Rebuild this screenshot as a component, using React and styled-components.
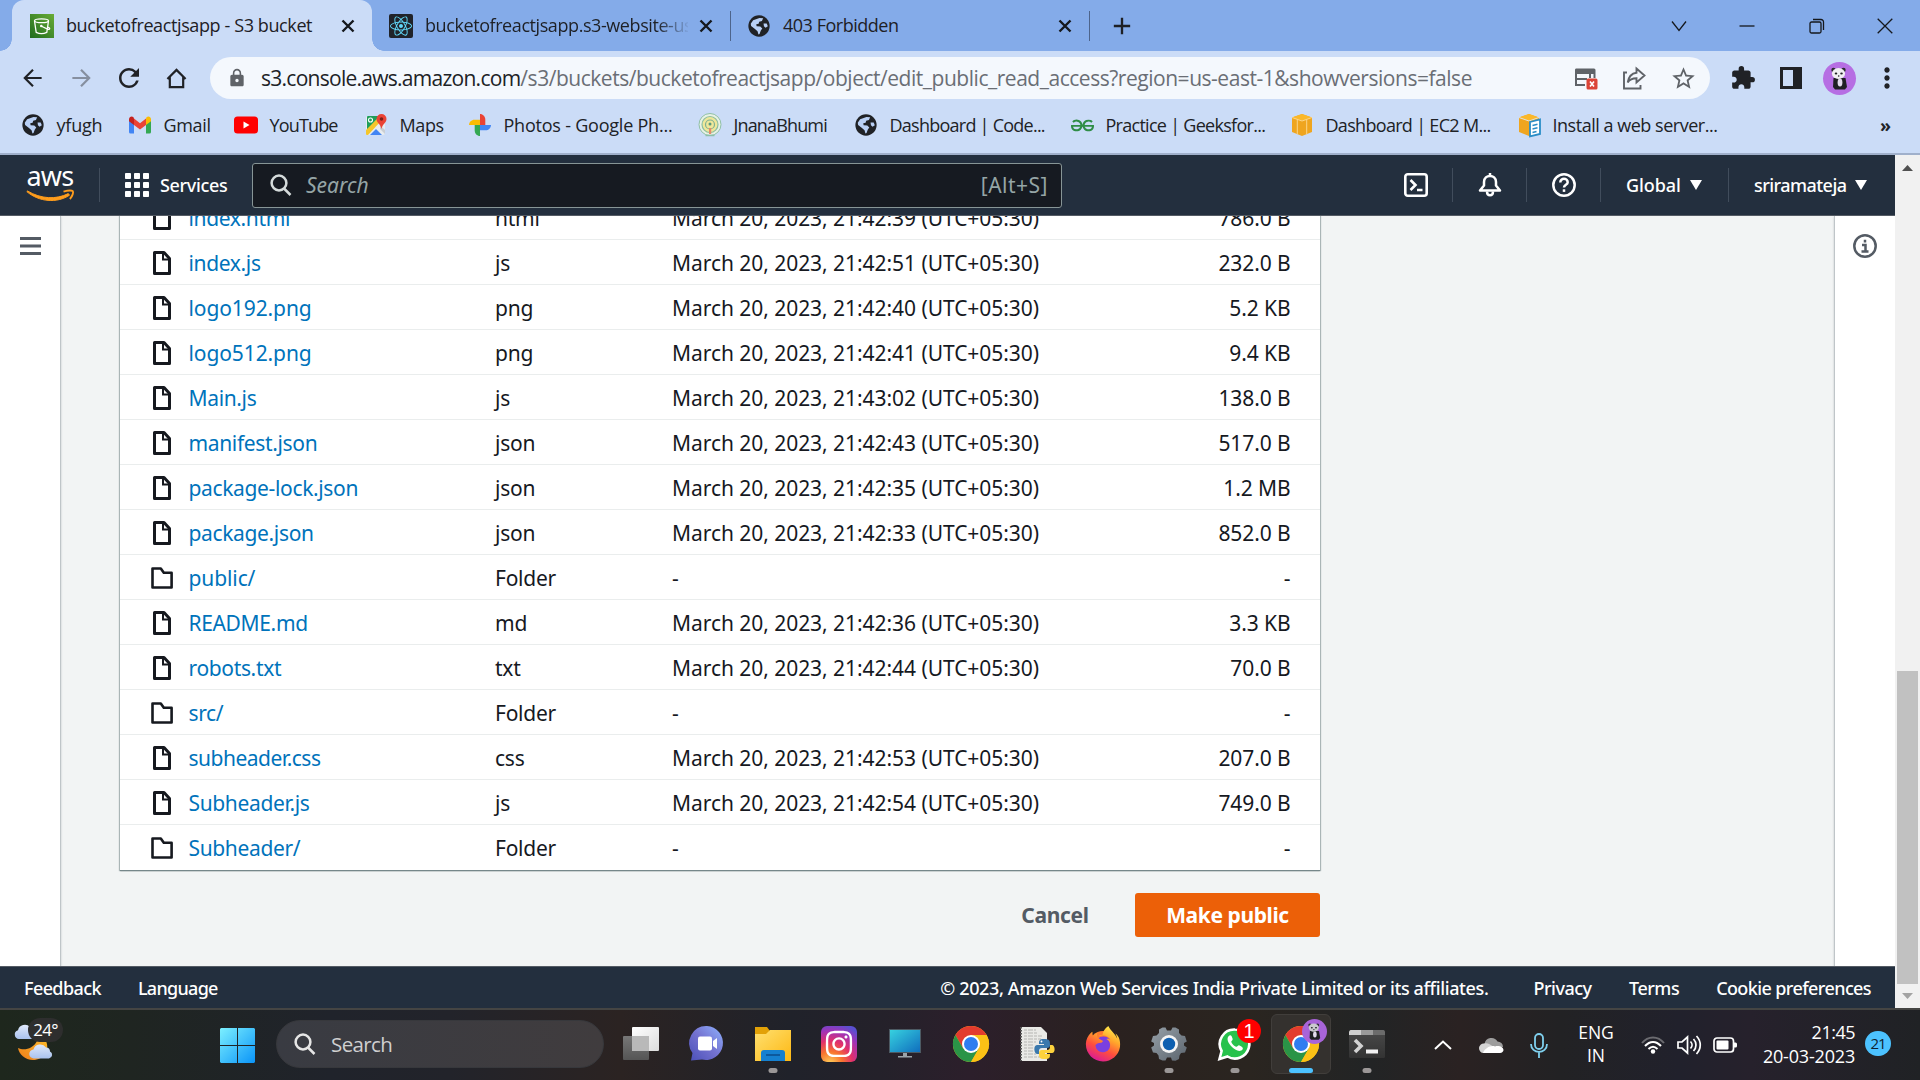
import React from "react";
import styled, { createGlobalStyle } from "styled-components";
import { MdExtension, MdStarOutline, MdLock, MdMoreVert, MdRefresh, MdAdd } from "react-icons/md";
import { FaReact, FaInstagram, FaFirefoxBrowser } from "react-icons/fa";
import { SiGeeksforgeeks } from "react-icons/si";

const UI = `"Open Sans", "Noto Sans", sans-serif`;
const PAGE = `"Noto Sans", "Open Sans", sans-serif`;

const Global = createGlobalStyle`
  * { box-sizing: border-box; }
  body { margin: 0; overflow: hidden; background: #f2f3f3; font-family: ${UI}; }
  svg { display: block; flex: none; overflow: visible; }
`;

const Screen = styled.div`
  width: 1920px;
  height: 1080px;
  display: flex;
  flex-direction: column;
  overflow: hidden;
`;

const Label = styled.span`
  white-space: nowrap;
  letter-spacing: ${(p) => p.$ls || 0}px;
`;

/* Centres one icon in a slot of a given width */
const Slot = styled.div`
  width: ${(p) => p.$w}px;
  height: ${(p) => (p.$h ? p.$h + "px" : "100%")};
  margin-left: ${(p) => p.$ml || 0}px;
  flex: none;
  display: flex;
  align-items: center;
  justify-content: center;
`;

/* ---------- Browser chrome ---------- */

const TabStrip = styled.div`
  height: 51px;
  flex: none;
  display: flex;
  align-items: center;
  padding-left: 12px;
  background: #84abe9;
  color: #1e2025;
  font-size: 18px;
`;

const Tab = styled.div`
  position: relative;
  width: ${(p) => p.$w}px;
  height: 51px;
  flex: none;
  display: flex;
  align-items: center;
  padding-left: ${(p) => p.$pad}px;
  border-radius: 12px 12px 0 0;
  background: ${(p) => (p.$active ? "#cbdcf7" : "transparent")};
  &::before,
  &::after {
    content: "";
    display: ${(p) => (p.$active ? "block" : "none")};
    position: absolute;
    bottom: 0;
    width: 12px;
    height: 12px;
  }
  &::before {
    left: -12px;
    background: radial-gradient(circle at 0 0, transparent 11.5px, #cbdcf7 12px);
  }
  &::after {
    right: -12px;
    background: radial-gradient(circle at 100% 0, transparent 11.5px, #cbdcf7 12px);
  }
`;

const TabTitle = styled(Label)`
  flex: none;
  width: ${(p) => p.$w}px;
  margin-left: ${(p) => p.$gap || 12}px;
  padding-bottom: 1px;
  mask-image: ${(p) => (p.$fade ? "linear-gradient(to right, #000 88%, transparent 101%)" : "none")};
`;

const TabDivider = styled.div`
  width: 1px;
  height: 30px;
  background: #4d648b;
`;

const WindowControls = styled.div`
  margin-left: auto;
  display: flex;
  height: 42px;
`;

const Toolbar = styled.div`
  height: 54px;
  flex: none;
  display: flex;
  align-items: center;
  padding-left: 9px;
  background: #cbdcf7;
  color: #202226;
`;

const AddressBar = styled.div`
  width: 1500px;
  height: 42px;
  margin-left: 10px;
  padding-left: 17px;
  border-radius: 21px;
  background: #f4f8fd;
  color: #5f6368;
  display: flex;
  align-items: center;
  flex: none;
`;

const Url = styled(Label)`
  flex: 1;
  margin-left: 14px;
  font-size: 21px;
  color: #6a6e75;
  b { font-weight: 400; color: #202226; letter-spacing: -0.73px; }
`;

const Bookmarks = styled.div`
  height: 50px;
  flex: none;
  display: flex;
  align-items: center;
  padding: 0 0 8px 21px;
  background: #cbdcf7;
  border-bottom: 2px solid #a0b0cb;
  color: #202226;
  font-size: 18px;
`;

const Bookmark = styled.div`
  width: ${(p) => p.$w}px;
  flex: none;
  display: flex;
  align-items: center;
  gap: 11.5px;
`;

const Overflow = styled.div`
  margin-left: auto;
  margin-right: 29px;
  font-weight: 700;
  line-height: 20px;
`;

/* ---------- Console page ---------- */

const Viewport = styled.div`
  height: 853px;
  flex: none;
  display: flex;
  font-family: ${PAGE};
`;

const Page = styled.div`
  width: 1895px;
  display: flex;
  flex-direction: column;
`;

const Nav = styled.div`
  height: 61px;
  flex: none;
  display: flex;
  align-items: center;
  background: #232f3e;
  border-bottom: 1px solid #545b64;
  color: #fff;
  font-size: 18px;
  font-weight: 500;
`;

const NavDivider = styled.div`
  width: 1px;
  height: 34px;
  margin-bottom: 1px;
  background: #414d5c;
  flex: none;
`;

const Logo = styled.div`
  width: 99px;
  height: 60px;
  padding: 8px 0 0 26px;
  flex: none;
`;

const LogoWord = styled.div`
  width: 48px;
  height: 27px;
  font: 400 27px/26px ${PAGE};
  letter-spacing: -0.7px;
  text-align: center;
`;

const ServicesButton = styled.div`
  width: 152px;
  display: flex;
  align-items: center;
  gap: 11px;
  padding-left: 25px;
`;

const SearchBox = styled.div`
  width: 810px;
  height: 45px;
  display: flex;
  align-items: center;
  padding: 0 13px 0 17px;
  border: 1px solid #879596;
  border-radius: 3px;
  background: #161a21;
  color: #95a5a6;
  font-size: 21px;
  font-weight: 400;
  i { flex: 1; margin-left: 14px; }
`;

const NavEnd = styled.div`
  margin-left: auto;
  display: flex;
  align-items: center;
  height: 60px;
`;

const NavMenu = styled.div`
  width: ${(p) => p.$w}px;
  padding-left: 25px;
  display: flex;
  align-items: center;
  gap: 9px;
`;

const Body = styled.div`
  height: 750px;
  flex: none;
  display: flex;
  background: #f2f4f4;
  overflow: hidden;
`;

const SidePanel = styled.div`
  width: 61px;
  flex: none;
  background: #fff;
  display: flex;
  justify-content: center;
  padding-top: 18px;
  border: 0 solid #bfc5c8;
  border-left-width: ${(p) => (p.$right ? 1 : 0)}px;
  border-right-width: ${(p) => (p.$right ? 0 : 1)}px;
  box-shadow: 0 1px 2px rgba(0, 28, 36, 0.2);
`;

const Main = styled.div`
  flex: 1;
  padding-left: 59px;
`;

const TableWindow = styled.div`
  height: 657px;
  width: 1204px;
  margin-left: -2px;
  padding-left: 2px;
  overflow: hidden;
  display: flex;
  flex-direction: column;
  justify-content: flex-end;
  padding-bottom: 3px;
`;

const Table = styled.div`
  width: 1200px;
  flex: none;
  background: #fff;
  box-shadow: 0 1px 1px #76878a, 1px 1px 1px rgba(0, 28, 36, 0.25), -1px 1px 1px rgba(0, 28, 36, 0.25);
`;

const Row = styled.div`
  height: 45px;
  display: grid;
  grid-template-columns: 37px 307px 177px 385px 1fr;
  align-items: center;
  padding: 1px 29.5px 0 31px;
  border-bottom: 1px solid #eaeded;
  color: #16191f;
  font-size: 21px;
  &:last-child { border-bottom-color: #fff; }
  svg { justify-self: start; }
`;

const FileLink = styled(Label)`
  color: #0073bb;
  margin-left: 0.5px;
`;

const Size = styled(Label)`
  text-align: right;
`;

const Actions = styled.div`
  width: 1200px;
  height: 64px;
  display: flex;
  align-items: flex-end;
  justify-content: flex-end;
  font-size: 21px;
  font-weight: 700;
`;

const ActionButton = styled.div`
  width: ${(p) => p.$w}px;
  height: 44px;
  display: flex;
  align-items: center;
  justify-content: center;
  padding-bottom: 1px;
  border-radius: 3px;
  background: ${(p) => (p.$primary ? "#ec6008" : "transparent")};
  color: ${(p) => (p.$primary ? "#fff" : "#545b64")};
`;

const Footer = styled.div`
  height: 42px;
  flex: none;
  display: flex;
  align-items: center;
  padding: 0 24px;
  background: #232f3e;
  border-top: 1px solid #545b64;
  color: #fff;
  font-size: 18px;
  font-weight: 500;
`;

const FooterItem = styled(Label)`
  margin-left: ${(p) => (p.$push ? "auto" : (p.$ml || 0) + "px")};
`;

const Scrollbar = styled.div`
  width: 25px;
  display: flex;
  flex-direction: column;
  align-items: center;
  background: #f1f1f1;
`;

const ThumbTrack = styled.div`
  flex: 1;
  display: flex;
  align-items: flex-end;
`;

const Thumb = styled.div`
  width: 21px;
  height: 313px;
  background: #c1c1c1;
`;

/* ---------- Taskbar ---------- */

const Taskbar = styled.div`
  height: 72px;
  flex: none;
  display: flex;
  align-items: center;
  border-top: 2px solid #454543;
  background: linear-gradient(90deg, #1e271d 0, #1f2521 130px, #20232b 330px, #22232a 450px, #2b2322 620px, #20222a 790px, #24212a 880px, #2c1f2b 970px, #2a211f 1110px, #2a2520 1250px, #222425 1370px, #2a2222 1460px, #222224 1560px, #21212c 1680px, #26212c 1750px, #202225 1920px);
  color: #fff;
`;

const Weather = styled.div`
  width: 220px;
  height: 70px;
  padding: 8px 0 0 14px;
  flex: none;
`;

const WeatherIcon = styled.div`
  position: relative;
  width: 50px;
  height: 56px;
`;

const Temperature = styled.div`
  position: absolute;
  left: 14px;
  top: 0;
  width: 35px;
  height: 24px;
  border-radius: 12px;
  background: #2e2e2e;
  font-size: 17px;
  line-height: 24px;
  text-align: center;
  letter-spacing: -0.8px;
`;

const TaskSearch = styled.div`
  width: 328px;
  height: 48px;
  margin: 0 4px 3px 21px;
  padding-left: 17px;
  display: flex;
  align-items: center;
  gap: 15px;
  flex: none;
  border-radius: 24px;
  border: 1px solid #37383c;
  background: linear-gradient(90deg, #393b42, #403c3e);
  color: #cfcfd0;
  font-size: 20.5px;
`;

const TaskButton = styled.div`
  position: relative;
  width: 60px;
  height: 60px;
  margin: 0 3px 3px;
  flex: none;
  display: flex;
  align-items: center;
  justify-content: center;
  border-radius: 6px;
  border: 1px solid ${(p) => (p.$active ? "#413e3b" : "transparent")};
  background: ${(p) => (p.$active ? "#34312e" : "transparent")};
  &::after {
    content: "";
    display: ${(p) => (p.$run ? "block" : "none")};
    position: absolute;
    bottom: 0;
    left: 50%;
    width: ${(p) => (p.$active ? 24 : 9)}px;
    height: 5px;
    transform: translateX(-50%);
    border-radius: 3px;
    background: ${(p) => (p.$active ? "#4cc2ff" : "#9b9797")};
  }
`;

const Badge = styled.div`
  position: absolute;
  right: 3px;
  top: 4px;
  width: 24px;
  height: 24px;
  border-radius: 12px;
  background: #fe0000;
  font: 20px/24px "Liberation Sans", sans-serif;
  text-align: center;
`;

const AvatarBadge = styled.div`
  position: absolute;
  right: 3px;
  top: 4px;
`;

const Language = styled.div`
  width: 66px;
  text-align: center;
  font-size: 17.5px;
  line-height: 23px;
  padding-bottom: 2px;
`;

const Clock = styled.div`
  width: 106px;
  text-align: right;
  font-size: 18px;
  line-height: 24px;
  padding-bottom: 2px;
`;

const Count = styled.div`
  width: 26px;
  height: 25px;
  margin: 0 0 3px 10px;
  border-radius: 13px;
  background: #4cc2ff;
  color: #10222e;
  font-size: 15px;
  line-height: 24px;
  letter-spacing: -1px;
  text-align: center;
`;

/* ---------- Icons ---------- */

const Globe = ({ s = 22 }) => (
  <svg width={s} height={s} viewBox="0 0 24 24">
    <circle cx="12" cy="12" r="11.6" fill="#202226" />
    <path d="M12.5 3.2 16.5 3.6 15.2 6.6 12.2 7.4 11.6 9.6 9 10.2 9.4 12.4 13.4 12.6 15.6 14.6 14 17 12.6 20.6 11.4 21.4 10.4 17.8 7.6 15.2 3.4 12 3 9.6 5.6 5.6Z" fill="#b9d0f5" />
    <path d="M17 9.4 20.4 9.2 21.6 12.4 19.2 14 17.4 12.2Z" fill="#b9d0f5" />
  </svg>
);

const S3Icon = () => (
  <svg width="24" height="24" viewBox="0 0 24 24">
    <defs><linearGradient id="s3" x1="0" y1="1" x2="1" y2="0"><stop stopColor="#1f6b1e" /><stop offset="1" stopColor="#69ac36" /></linearGradient></defs>
    <rect width="24" height="24" fill="url(#s3)" />
    <g fill="none" stroke="#fff" strokeWidth="1.3">
      <ellipse cx="11.5" cy="6.8" rx="7" ry="1.9" />
      <path d="M4.5 7 6.2 18.4Q11.5 21 16.8 18.4L18.5 7M11 12 18 15.4Q20.4 15.4 19.4 14L17.8 13" />
    </g>
    <circle cx="11.3" cy="12" r="1.3" fill="#fff" />
  </svg>
);

const ReactTile = () => (
  <svg width="24" height="24" viewBox="0 0 24 24">
    <rect width="24" height="24" rx="2" fill="#20232a" />
    <FaReact x="1" y="1" size={22} color="#61dafb" />
  </svg>
);

const Gmail = () => (
  <svg width="24" height="24" viewBox="0 0 24 24">
    <path d="M1 5.5V19a1.6 1.6 0 0 0 1.6 1.6H6V9Z" fill="#4285f4" />
    <path d="M23 5.5V19a1.6 1.6 0 0 1-1.6 1.6H18V9Z" fill="#34a853" />
    <path d="M18 5.6V12l5-3.8V6.3c0-2.5-2.6-3.6-4.3-2.3Z" fill="#fbbc04" />
    <path d="M6 12V5.6l6 4.6 6-4.6V12l-6 4.6Z" fill="#ea4335" />
    <path d="M1 6.3v1.9L6 12V5.6L5.3 4C3.600 2.700 1 3.800 1 6.300Z" fill="#c5221f" />
  </svg>
);

const YouTube = () => (
  <svg width="24" height="24" viewBox="0 0 24 24">
    <rect y="3.500" width="24" height="17" rx="3.500" fill="#f00" />
    <path d="M9.500 8.500v7l6-3.500Z" fill="#fff" />
  </svg>
);

const Maps = () => (
  <svg width="24" height="24" viewBox="0 0 24 24">
    <rect x="2" y="3" width="19" height="19" rx="2" fill="#e8ecef" />
    <path d="M4 3h12L3 17V4a1 1 0 0 1 1-1Z" fill="#1f9d5a" />
    <path d="M2 17 15 4l3 3L4 22H3a1 1 0 0 1-1-1Z" fill="#f5c62b" />
    <path d="m6 22 6-6 6 6Z" fill="#4285f4" />
    <path d="M16 12.500 21 17v4l-5-5Z" fill="#c9ced3" />
    <circle cx="6.500" cy="7" r="2" fill="none" stroke="#fff" strokeWidth="1.100" />
    <path d="M17.500 1a5 5 0 0 0-5 5c0 4 4 4.500 5 10 1-5.500 5-6 5-10a5 5 0 0 0-5-5Z" fill="#ea4335" />
    <circle cx="17.500" cy="6" r="1.800" fill="#7d1f18" />
  </svg>
);

const Photos = () => (
  <svg width="24" height="24" viewBox="0 0 24 24">
    <path d="M12 1c3 0 5.300 2.500 5.300 5.500V12H12Z" fill="#ea4335" />
    <path d="M23 12c0 3-2.500 5.300-5.500 5.300H12V12Z" fill="#4285f4" />
    <path d="M12 23c-3 0-5.300-2.500-5.300-5.500V12H12Z" fill="#34a853" />
    <path d="M1 12c0-3 2.500-5.300 5.500-5.300H12V12Z" fill="#fbbc04" />
  </svg>
);

const Emblem = () => (
  <svg width="24" height="24" viewBox="0 0 24 24">
    <circle cx="12" cy="11.500" r="11" fill="#e9f1e4" stroke="#8fc0a6" />
    <circle cx="12" cy="11.500" r="8" fill="#efe79a" stroke="#8cbfa0" strokeWidth="1.200" />
    <circle cx="12" cy="11.500" r="4.500" fill="none" stroke="#7fb093" strokeWidth="1.200" />
    <circle cx="12" cy="11" r="1.500" fill="#5b9a7c" />
    <rect x="11" y="15" width="2.200" height="6" fill="#e58a6a" />
    <path d="M7.500 22.500h9" stroke="#8cbfa8" strokeWidth="1.500" />
  </svg>
);

const Cube = ({ doc }) => (
  <svg width="24" height="24" viewBox="0 0 24 24">
    <path d="M12 1 22 4.500V19L12 23 2 19V4.500Z" fill="#efa51f" />
    <path d="M12 1 22 4.500 12 8 2 4.500Z" fill="#fbb829" />
    {doc ? (
      <>
        <path d="M2 4.500 12 8l10-3.500" stroke="#e3e3dc" strokeWidth="1" fill="none" />
        <path d="M13 9 23 6.500V21l-10 2.300Z" fill="#fff" stroke="#2a8dc7" strokeWidth="1.800" />
        <path d="m15.500 12.500 5-1.200M15.500 16l5-1.200M15.500 19.500l4-1" stroke="#2a8dc7" strokeWidth="1.600" />
      </>
    ) : (
      <path d="M7.300 6.500v15M16.700 6.500v15M2 4.500 12 8l10-3.500" stroke="#fbd58a" strokeWidth="1" fill="none" />
    )}
  </svg>
);

const Arrow = ({ flip, color }) => (
  <svg width="20" height="20" viewBox="0 0 22 22" fill="none" stroke={color} strokeWidth="2.400">
    <path d={flip ? "M1.500 11h18M11 2l9 9-9 9" : "M20.500 11H2.500M11 2 2 11l9 9"} />
  </svg>
);

const Home = () => (
  <svg width="21" height="21" viewBox="0 0 22 22" fill="none" stroke="#202226" strokeWidth="2.300">
    <path d="M1.500 11.500 11 2l9.500 9.500M4 9.500V20h14V9.500" />
  </svg>
);

const CardBlocked = () => (
  <svg width="24" height="24" viewBox="0 0 24 24">
    <path d="M2 2.500h18a1.500 1.500 0 0 1 1.500 1.500V8H1V4A1.500 1.500 0 0 1 2 2.500Z" fill="#5f6368" />
    <path d="M2 8v11h9M2 13h11M20.500 8v4M16 8v4" stroke="#5f6368" strokeWidth="2" fill="none" />
    <rect x="12.500" y="12.500" width="11" height="11" rx="1.500" fill="#db4437" />
    <path d="m16 15.500 4 5m0-5-4 5" stroke="#fff" strokeWidth="1.600" />
  </svg>
);

const Share = () => (
  <svg width="24" height="24" viewBox="0 0 24 24" fill="none" stroke="#5f6368" strokeWidth="1.900">
    <path d="M5 6.500H2V22.500h16.500V19M14.500 2.500l8 7-8 7v-4.200c-4.500 0-7 1.400-8.800 4.200.8-5 3.500-9.200 8.800-9.800Z" />
  </svg>
);

const SidePanelIcon = () => (
  <svg width="22" height="22" viewBox="0 0 22 22">
    <path d="M0 0h22v22H0ZM3 3v16h10V3Z" fill="#202226" fillRule="evenodd" />
  </svg>
);

const Panda = ({ s, grey }) => (
  <svg width={s} height={s} viewBox="0 0 33 33">
    <circle cx="16.500" cy="16.500" r="16.500" fill={grey ? "#a864d8" : "#b66ee3"} />
    <circle cx="10.500" cy="8" r="2.200" fill="#2b2b2f" />
    <circle cx="20.500" cy="8" r="2.200" fill="#2b2b2f" />
    <path d="M10.500 16h12l1.500 9-2 2.500H12L10 25Z" fill="#202024" />
    <ellipse cx="17" cy="20.500" rx="2.400" ry="4" fill="#e4dcee" />
    <ellipse cx="15.500" cy="11.500" rx="6.600" ry="5.400" fill={grey ? "#c9c9cd" : "#f0f0f2"} />
    <ellipse cx="13" cy="11.500" rx="1.300" ry="1" fill="#202024" />
    <ellipse cx="18.500" cy="11.500" rx="1.300" ry="1" fill="#202024" />
    <circle cx="15.700" cy="14" r=".8" fill="#202024" />
  </svg>
);

const FileIcon = () => (
  <svg width="22" height="24" viewBox="0 0 22 24" fill="none" stroke="#16191f" strokeWidth="3" strokeLinejoin="round">
    <path d="M3.500 1.500h9.500l5.500 6v15h-15Z" />
    <path d="M12 2v6.500h6.500" strokeWidth="2" strokeLinejoin="miter" />
  </svg>
);

const FolderIcon = () => (
  <svg width="22" height="22" viewBox="0 0 22 22" fill="none" stroke="#16191f" strokeWidth="2.600" strokeLinejoin="round">
    <path d="M1.500 1.500h8.300l3 4.300h7.800V20.500H1.500Z" />
  </svg>
);

const Smile = () => (
  <svg width="48" height="14" viewBox="0 0 48 14" fill="none" stroke="#ff9d1c">
    <path d="M.8 1.600C13 12 31 13.500 43.500 5.200L42.300 3.600C30 9.800 15 9 1.500 1Z" fill="#ff9d1c" strokeWidth="1" />
    <path d="M37.500 1.600C42 .2 46 .3 46.800 1.100c.8 1-.2 5.200-2.900 7.900" strokeWidth="1.900" />
  </svg>
);

const Grid = () => (
  <svg width="24" height="24" viewBox="0 0 24 24" fill="#fff">
    {[0, 9, 18].map((y) => [0, 9, 18].map((x) => <rect key={x + "-" + y} x={x} y={y} width="6" height="6" rx=".8" />))}
  </svg>
);

const Magnifier = ({ color, s = 22 }) => (
  <svg width={s} height={s} viewBox="0 0 22 22" fill="none" stroke={color} strokeWidth="2.500">
    <circle cx="9" cy="9" r="7.400" />
    <path d="m14 14.500 6.500 6.500" />
  </svg>
);

const CloudShell = () => (
  <svg width="24" height="24" viewBox="0 0 24 24" fill="none" stroke="#fff" strokeWidth="2.600">
    <rect x="1.300" y="1.300" width="21.400" height="21.400" rx="2.500" />
    <path d="m6.500 7 5 5-5 5M13 17h5.500" />
  </svg>
);

const Bell = () => (
  <svg width="24" height="24" viewBox="0 0 24 24" fill="none" stroke="#fff" strokeWidth="2.500" strokeLinejoin="round">
    <path d="M12 0v3M2 17.500 6 12.500V9c0-4 3-6 6-6s6 2 6 6v3.500l4 5Z" />
    <path d="M9 18.500c0 5 6 5 6 0" />
  </svg>
);

const Help = () => (
  <svg width="24" height="24" viewBox="0 0 24 24" fill="none" stroke="#fff" strokeWidth="2.500">
    <circle cx="12" cy="12" r="10.700" />
    <path d="M8.300 9.500c0-5 7.400-4.600 7.400-.3 0 2.700-3.700 2.500-3.700 5.400" />
    <path d="M12 16.300v2.600" />
  </svg>
);

const Caret = ({ w = 12, h = 10, up, color = "#fff" }) => (
  <svg width={w} height={h} viewBox="0 0 12 10" preserveAspectRatio="none">
    <path d={up ? "M0 10 6 0l6 10Z" : "M0 0h12L6 10Z"} fill={color} />
  </svg>
);

const Menu = () => (
  <svg width="21" height="19" viewBox="0 0 21 19" fill="#545b64">
    <rect width="21" height="3" /><rect y="7.500" width="21" height="3" /><rect y="15" width="21" height="3" />
  </svg>
);

const Info = () => (
  <svg width="24" height="24" viewBox="0 0 24 24" fill="none" stroke="#545b64" strokeWidth="2.500">
    <circle cx="12" cy="12" r="10.700" />
    <path d="M9 11h3.500v7M8.500 17.500h7M12 5.800v2.700" />
  </svg>
);

const MoonClouds = () => (
  <svg width="50" height="56" viewBox="0 0 50 56">
    <defs>
      <linearGradient id="cl" x1="0" y1="0" x2="0" y2="1"><stop stopColor="#dfe9fb" /><stop offset="1" stopColor="#a9c2ee" /></linearGradient>
      <linearGradient id="mn" x1="1" y1="0" x2="0" y2="1"><stop stopColor="#fbb72b" /><stop offset="1" stopColor="#ee7d1a" /></linearGradient>
    </defs>
    <path d="M5 21a4.500 4.500 0 0 1-1-8.800A7 7 0 0 1 16 9c4 0 6 3 6 6v6Z" fill="url(#cl)" />
    <path d="M4 30c6 3 15 1 19-7h9c4 9-2 19-13 19C11 42 5 36 4 30Z" fill="url(#mn)" />
    <path d="M20 40.500a4.500 4.500 0 0 1-.5-9A7 7 0 0 1 32 29.500c3 0 4 2 4 4a3.700 3.700 0 0 1-1 7Z" fill="url(#cl)" />
  </svg>
);

const Windows = () => (
  <svg width="35" height="35" viewBox="0 0 35 35">
    <defs><linearGradient id="win" gradientUnits="userSpaceOnUse" x1="0" y1="0" x2="35" y2="35"><stop stopColor="#7cf0ff" /><stop offset="1" stopColor="#0a94f8" /></linearGradient></defs>
    <path d="M1 0h16v17H0V1ZM18 0h16l1 1v16H18ZM0 18h17v17H1l-1-1ZM18 18h17v16l-1 1H18Z" fill="url(#win)" />
  </svg>
);

const TaskView = () => (
  <svg width="36" height="34" viewBox="0 0 36 34">
    <defs>
      <linearGradient id="tv" x1="0" y1="0" x2="1" y2="1"><stop stopColor="#fff" /><stop offset="1" stopColor="#dcdcdc" /></linearGradient>
      <linearGradient id="tv2" x1="0" y1="0" x2="0" y2="1"><stop stopColor="#777" /><stop offset="1" stopColor="#555" /></linearGradient>
    </defs>
    <rect y="9" width="26" height="24" rx="1" fill="url(#tv2)" />
    <rect x="9" width="27" height="24" rx="1" fill="url(#tv)" />
    <path d="M9 9h17v15H9Z" fill="#b9b9b9" />
  </svg>
);

const Chat = () => (
  <svg width="34" height="35" viewBox="0 0 34 35">
    <defs><linearGradient id="ch" x1="0" y1="1" x2="1" y2="0"><stop stopColor="#4a4fb8" /><stop offset=".5" stopColor="#7472d0" /><stop offset="1" stopColor="#8fb3ff" /></linearGradient></defs>
    <path d="M17 0a17 17 0 1 1-5 33.500L1 34.500 2.500 27A17 17 0 0 1 17 0Z" fill="url(#ch)" />
    <rect x="8" y="10.500" width="14" height="14" rx="2" fill="#fff" />
    <path d="m23 15 4-3v11l-4-3Z" fill="#fff" />
  </svg>
);

const Explorer = () => (
  <svg width="36" height="34" viewBox="0 0 36 34">
    <defs><linearGradient id="ex" x1="0" y1="0" x2="1" y2="1"><stop stopColor="#ffe070" /><stop offset="1" stopColor="#fdb813" /></linearGradient></defs>
    <path d="M0 0h12l3 4v6H0Z" fill="#e2a107" />
    <path d="M0 7h11l4-4h21v31H0Z" fill="url(#ex)" />
    <path d="M6 34V26a3 3 0 0 1 3-3h18a3 3 0 0 1 3 3v8Z" fill="#1580d0" />
    <path d="M11 28h14" stroke="#0b4d8c" strokeWidth="1.500" />
  </svg>
);

const Instagram = () => (
  <svg width="36" height="36" viewBox="0 0 36 36">
    <defs>
      <radialGradient id="ig" cx=".25" cy="1.050" r="1.150"><stop stopColor="#fed45c" /><stop offset=".3" stopColor="#f8742f" /><stop offset=".55" stopColor="#e1306c" /><stop offset=".8" stopColor="#a033b8" /><stop offset="1" stopColor="#5a4fd0" /></radialGradient>
    </defs>
    <rect width="36" height="36" rx="6" fill="url(#ig)" />
    <FaInstagram x="3" y="3" size={30} color="#fff" />
  </svg>
);

const Monitor = () => (
  <svg width="32" height="30" viewBox="0 0 32 30">
    <defs><linearGradient id="mo" x1="0" y1="0" x2="1" y2="1"><stop stopColor="#37d3e0" /><stop offset="1" stopColor="#0f6cbd" /></linearGradient></defs>
    <rect x=".5" y=".5" width="31" height="23" fill="url(#mo)" stroke="#4d5a63" />
    <path d="M14 24h4v3h5v1.500H9V27h5Z" fill="#9aa3a9" />
  </svg>
);

const Chrome = () => (
  <svg width="36" height="36" viewBox="-18 -18 36 36">
    <circle r="18" fill="#fbc116" />
    <path d="M-15.600-9A18 18 0 0 1 15.600-9H0L-7.800 4.500Z" fill="#e33b2e" />
    <path d="M-15.600-9A18 18 0 0 0 0 18L7.800 4.500-7.800 4.500Z" fill="#2a9447" />
    <path d="M15.600-9H0L7.800 4.500 0 18A18 18 0 0 0 15.600-9Z" fill="#fbc116" />
    <circle r="9" fill="#fff" />
    <circle r="7" fill="#2f7df0" />
  </svg>
);

const PythonFile = () => (
  <svg width="34" height="34" viewBox="0 0 34 34">
    <path d="M1 0h20l6 6v28H1Z" fill="#e9e9e6" />
    <path d="M4 3h12M4 6h14M4 9h18M4 12h17M4 15h12M4 18h10M4 21h10M4 24h10M4 27h12M4 30h19" stroke="#b5b5b2" strokeWidth="1" strokeDasharray="3 1 5 1" />
    <path d="M1 0v34" stroke="#555" strokeWidth="2" strokeDasharray="1.500 1.500" />
    <path d="M24 12c-5 0-5 2-5 5h5v1h-7c-4 0-3 9 0 9h2v-3c0-2 1-3 3-3h5c2 0 3-1 3-3 0-4 0-6-6-6Z" fill="#3a78ad" />
    <path d="M25 32c5 0 5-2 5-5h-5v-1h7c4 0 3-8 0-8h-2v2c0 2-1 3-3 3h-5c-2 0-3 1-3 3 0 4 0 6 6 6Z" fill="#fdd23d" />
    <circle cx="21.500" cy="14.500" r=".9" fill="#fff" />
  </svg>
);

const Firefox = () => (
  <svg width="36" height="36" viewBox="0 0 36 36">
    <defs><linearGradient id="fx" x1=".8" y1="0" x2=".3" y2="1"><stop stopColor="#fff44f" /><stop offset=".35" stopColor="#ffa62b" /><stop offset=".65" stopColor="#ff4f3c" /><stop offset="1" stopColor="#d8189b" /></linearGradient></defs>
    <circle cx="18" cy="19" r="14" fill="#ff7a2e" />
    <circle cx="18.500" cy="19" r="8.500" fill="#7a3fe0" />
    <FaFirefoxBrowser x="0" y="0" size={36} fill="url(#fx)" />
  </svg>
);

const Settings = () => (
  <svg width="36" height="36" viewBox="-18 -18 36 36">
    <defs><linearGradient id="gr" x1="0" y1="0" x2="1" y2="1"><stop stopColor="#96a0a8" /><stop offset="1" stopColor="#5c656e" /></linearGradient></defs>
    <path d="M-6.500-16.500-3.500-16.500-2-13.500H2L3.500-16.500H6.500L10-14.500 10-11 12.500-8.500 16-8 17.800-2.500 15-1V1.500L17.800 3.500 16 8.500 12 9 10.500 11.500 10 15 6.500 16.700 3 16.500 2 13.500H-2L-3.500 16.500H-6.500L-10 15-10.500 11.500-12.500 9-16 8.500-17.800 3.500-15 1.500V-1L-17.800-2.500-16-8-12.500-8.500-10-11-10-14.500Z" fill="url(#gr)" />
    <circle r="9" fill="#f4f4f4" />
    <circle r="6.200" fill="#0d5fb0" />
  </svg>
);

const WhatsApp = () => (
  <svg width="34" height="34" viewBox="0 0 34 34">
    <path d="M17 2.500A14.500 14.500 0 1 1 9.500 29.500L1.500 32 3.600 24A14.500 14.500 0 0 1 17 2.500Z" fill="#27c24c" stroke="#fff" strokeWidth="2.600" />
    <path d="M11.500 8.500c-3 2-2.500 6 1.500 10.500s9 6.500 11.500 3.500c1-1.500 0-2.500-3-4-1.500-.7-2 1.500-3.200 1.300-2-.4-4.600-3-5-5 0-1 1.800-1.500 1.300-3-.7-2-1.300-4-3.100-3.300Z" fill="#fff" />
  </svg>
);

const Terminal = () => (
  <svg width="36" height="28" viewBox="0 0 36 28">
    <defs><linearGradient id="te" x1="0" y1="0" x2="0" y2="1"><stop stopColor="#4a4a4a" /><stop offset="1" stopColor="#333" /></linearGradient></defs>
    <rect width="36" height="28" rx="1.500" fill="url(#te)" />
    <path d="M0 5V1.500L1.500 0H12v5Z" fill="#d0d0d0" />
    <path d="M12 0h12v5H12Z" fill="#9a9a9a" />
    <path d="M24 0h10.500L36 1.500V5H24Z" fill="#6b6b6b" />
    <path d="m6 10 6 6-6 6" fill="none" stroke="#d2d2d2" strokeWidth="3.600" />
    <rect x="17" y="19.500" width="12" height="4" fill="#f2f2f2" />
  </svg>
);

const Cloud = () => (
  <svg width="25" height="17" viewBox="0 0 25 17">
    <path d="M5.500 7a7 7 0 0 1 13-2.500A5.500 5.500 0 0 1 24 10l-10 1Z" fill="#9d9d9d" />
    <path d="M4.500 16a4.700 4.700 0 0 1 .5-9.500c3.500-.5 5 0 9 3L6 16Z" fill="#d4d4d4" />
    <path d="M4 16c2-5 8-8 12-6.500 3-1 8-.5 8.500 3.500 0 1.500-1.500 3-3.500 3Z" fill="#fff" />
  </svg>
);

const Mic = () => (
  <svg width="18" height="25" viewBox="0 0 18 25" fill="none" stroke="#7fd0ee" strokeWidth="1.800">
    <rect x="5" y="1" width="8" height="15" rx="4" />
    <path d="M1 11c0 10.500 16 10.500 16 0M9 19v6" />
  </svg>
);

const Wifi = () => (
  <svg width="24" height="18" viewBox="0 0 24 18" fill="none" strokeWidth="2">
    <path d="M1 7C7-.5 17-.5 23 7" stroke="#6b6b70" />
    <path d="M4 10c5-5.500 11-5.500 16 0M7.500 13c3-3 6-3 9 0" stroke="#fff" />
    <circle cx="12" cy="15.500" r="2.200" fill="#fff" />
  </svg>
);

const Speaker = () => (
  <svg width="24" height="20" viewBox="0 0 24 20" fill="none" stroke="#fff" strokeWidth="1.700">
    <path d="M1 7h4l5.500-5v16L5 13H1ZM13.500 6.500c2 2 2 5 0 7M16.500 4c3.300 3.500 3.300 8.500 0 12M19.500 1c5 5.500 5 12.500 0 18" />
  </svg>
);

const Battery = () => (
  <svg width="24" height="16" viewBox="0 0 24 16">
    <rect x="1" y="1" width="19.500" height="14" rx="3" fill="none" stroke="#fff" strokeWidth="1.700" />
    <rect x="3.500" y="3.500" width="12" height="9" rx="1" fill="#fff" />
    <path d="M21 5.500h1.500a1.500 1.500 0 0 1 1.500 1.500v2a1.500 1.500 0 0 1-1.500 1.500H21Z" fill="#fff" />
  </svg>
);

const Line = ({ d, w = 16, h = 16, color = "#15181d", sw = 1.3 }) => (
  <svg width={w} height={h} viewBox={`0 0 ${w} ${h}`} fill="none" stroke={color} strokeWidth={sw}><path d={d} /></svg>
);

const TabClose = () => <Line w={14} h={14} sw={2.4} d="M1.500 1.500 12.500 12.500M12.500 1.500 1.500 12.500" />;

/* ---------- Data ---------- */

const bookmarks = [
  [<Globe />, "yfugh", 107, -0.22],
  [<Gmail />, "Gmail", 106, -0.32],
  [<YouTube />, "YouTube", 130, -0.85],
  [<Maps />, "Maps", 104, -0.4],
  [<Photos />, "Photos - Google Ph...", 230, -0.22],
  [<Emblem />, "JnanaBhumi", 156, -0.85],
  [<Globe />, "Dashboard | Code...", 216, -0.75],
  [<SiGeeksforgeeks size={23} color="#2f8d46" />, "Practice | Geeksfor...", 220, -0.72],
  [<Cube />, "Dashboard | EC2 M...", 227, -0.69],
  [<Cube doc />, "Install a web server...", 210, -0.48],
];

const day = (t) => `March 20, 2023, ${t} (UTC+05:30)`;
const files = [
  ["index.html", "html", day("21:42:39"), "786.0 B"],
  ["index.js", "js", day("21:42:51"), "232.0 B"],
  ["logo192.png", "png", day("21:42:40"), "5.2 KB", -0.1],
  ["logo512.png", "png", day("21:42:41"), "9.4 KB", -0.1],
  ["Main.js", "js", day("21:43:02"), "138.0 B"],
  ["manifest.json", "json", day("21:42:43"), "517.0 B"],
  ["package-lock.json", "json", day("21:42:35"), "1.2 MB"],
  ["package.json", "json", day("21:42:33"), "852.0 B"],
  ["public/", "Folder", "-", "-", -0.1],
  ["README.md", "md", day("21:42:36"), "3.3 KB"],
  ["robots.txt", "txt", day("21:42:44"), "70.0 B"],
  ["src/", "Folder", "-", "-"],
  ["subheader.css", "css", day("21:42:53"), "207.0 B", -0.5],
  ["Subheader.js", "js", day("21:42:54"), "749.0 B"],
  ["Subheader/", "Folder", "-", "-"],
];

const apps = [
  { icon: <TaskView /> },
  { icon: <Chat /> },
  { icon: <Explorer />, run: true },
  { icon: <Instagram /> },
  { icon: <Monitor /> },
  { icon: <Chrome /> },
  { icon: <PythonFile /> },
  { icon: <Firefox /> },
  { icon: <Settings />, run: true },
  { icon: <WhatsApp />, run: true, over: <Badge>1</Badge> },
  { icon: <Chrome />, run: true, active: true, over: <AvatarBadge><Panda s={25} grey /></AvatarBadge> },
  { icon: <Terminal />, run: true },
];

export default function App() {
  return (
    <Screen>
      <Global />
      <TabStrip>
        <Tab $w={360} $pad={18} $active>
          <S3Icon />
          <TabTitle $w={260} $ls={-0.39}>bucketofreactjsapp - S3 bucket</TabTitle>
          <Slot $w={44}><TabClose /></Slot>
        </Tab>
        <Tab $w={358} $pad={17}>
          <ReactTile />
          <TabTitle $w={263} $ls={-0.42} $fade>bucketofreactjsapp.s3-website-us</TabTitle>
          <Slot $w={35}><TabClose /></Slot>
        </Tab>
        <TabDivider />
        <Tab $w={358} $pad={17}>
          <Globe />
          <TabTitle $w={264} $ls={-0.48} $gap={13}>403 Forbidden</TabTitle>
          <Slot $w={35}><TabClose /></Slot>
        </Tab>
        <TabDivider />
        <Slot $w={63}><MdAdd size={28} stroke="currentColor" strokeWidth="0" /></Slot>
        <WindowControls>
          <Slot $w={68}><Line d="M1 3.500 8 12.500 15 3.500" /></Slot>
          <Slot $w={68}><Line d="M.5 8h15" /></Slot>
          <Slot $w={69}><Line d="M3.500 4h8a1.500 1.500 0 0 1 1.500 1.500v8a1.500 1.500 0 0 1-1.500 1.500h-8a1.500 1.500 0 0 1-1.500-1.500v-8A1.500 1.500 0 0 1 3.500 4ZM5 1.500h8A2.500 2.500 0 0 1 15.500 4v8" /></Slot>
          <Slot $w={70}><Line d="M.7.7 15.300 15.300M15.300.7.7 15.300" /></Slot>
        </WindowControls>
      </TabStrip>

      <Toolbar>
        <Slot $w={48}><Arrow color="#202226" /></Slot>
        <Slot $w={48}><Arrow color="#868f9f" flip /></Slot>
        <Slot $w={48}><MdRefresh size={30} /></Slot>
        <Slot $w={47}><Home /></Slot>
        <AddressBar>
          <MdLock size={20} />
          <Url $ls={-0.47}><b>s3.console.aws.amazon.com</b>/s3/buckets/bucketofreactjsapp/object/edit_public_read_access?region=us-east-1&amp;showversions=false</Url>
          <Slot $w={48}><CardBlocked /></Slot>
          <Slot $w={47}><Share /></Slot>
          <Slot $w={53}><MdStarOutline size={27} /></Slot>
        </AddressBar>
        <Slot $w={66}><MdExtension size={26} /></Slot>
        <Slot $w={30}><SidePanelIcon /></Slot>
        <Slot $w={66}><Panda s={33} /></Slot>
        <Slot $w={29}><MdMoreVert size={32} /></Slot>
      </Toolbar>

      <Bookmarks>
        {bookmarks.map(([icon, text, w, ls]) => (
          <Bookmark key={text} $w={w}>
            <Slot $w={24}>{icon}</Slot>
            <Label $ls={ls}>{text}</Label>
          </Bookmark>
        ))}
        <Overflow>»</Overflow>
      </Bookmarks>

      <Viewport>
        <Page>
          <Nav>
            <Logo>
              <LogoWord>aws</LogoWord>
              <Smile />
            </Logo>
            <NavDivider />
            <ServicesButton><Grid /><Label $ls={-0.34}>Services</Label></ServicesButton>
            <SearchBox>
              <Magnifier color="#d5dbdb" />
              <i>Search</i>
              <Label $ls={0.5}>[Alt+S]</Label>
            </SearchBox>
            <NavEnd>
              <Slot $w={72}><CloudShell /></Slot>
              <NavDivider />
              <Slot $w={73}><Bell /></Slot>
              <NavDivider />
              <Slot $w={73}><Help /></Slot>
              <NavDivider />
              <NavMenu $w={127}><Label $ls={-0.08}>Global</Label><Caret /></NavMenu>
              <NavDivider />
              <NavMenu $w={166}><Label $ls={-0.55}>sriramateja</Label><Caret /></NavMenu>
            </NavEnd>
          </Nav>

          <Body>
            <SidePanel><Slot $w={60} $h={24}><Menu /></Slot></SidePanel>
            <Main>
              <TableWindow>
                <Table>
                  {files.map(([name, type, modified, size, ls = -0.35]) => (
                    <Row key={name}>
                      {type === "Folder" ? <FolderIcon /> : <FileIcon />}
                      <FileLink $ls={ls}>{name}</FileLink>
                      <Label $ls={-0.25}>{type}</Label>
                      <Label $ls={-0.05}>{modified}</Label>
                      <Size $ls={-0.1}>{size}</Size>
                    </Row>
                  ))}
                </Table>
              </TableWindow>
              <Actions>
                <ActionButton $w={160}><Label $ls={-0.3}>Cancel</Label></ActionButton>
                <ActionButton $w={185} $primary><Label $ls={-0.4}>Make public</Label></ActionButton>
              </Actions>
            </Main>
            <SidePanel $right><Info /></SidePanel>
          </Body>

          <Footer>
            <FooterItem $ls={-0.6}>Feedback</FooterItem>
            <FooterItem $ls={-0.7} $ml={37}>Language</FooterItem>
            <FooterItem $ls={-0.37} $push>© 2023, Amazon Web Services India Private Limited or its affiliates.</FooterItem>
            <FooterItem $ls={-0.5} $ml={45}>Privacy</FooterItem>
            <FooterItem $ls={-0.5} $ml={37.5}>Terms</FooterItem>
            <FooterItem $ls={-0.6} $ml={37}>Cookie preferences</FooterItem>
          </Footer>
        </Page>

        <Scrollbar>
          <Slot $w={25} $h={25}><Caret up w={11} h={6} color="#505050" /></Slot>
          <ThumbTrack><Thumb /></ThumbTrack>
          <Slot $w={25} $h={24}><Caret w={11} h={6} color="#a3a3a3" /></Slot>
        </Scrollbar>
      </Viewport>

      <Taskbar>
        <Weather>
          <WeatherIcon><MoonClouds /><Temperature>24°</Temperature></WeatherIcon>
        </Weather>
        <Windows />
        <TaskSearch><Magnifier color="#e6e6e6" /><Label $ls={-0.6}>Search</Label></TaskSearch>
        {apps.map((a, i) => (
          <TaskButton key={i} $run={a.run} $active={a.active}>{a.icon}{a.over}</TaskButton>
        ))}
        <Slot $w={48} $ml={19}><Line w={18} h={10} d="M1 9 9 1.500 17 9" color="#fff" sw={2} /></Slot>
        <Slot $w={48}><Cloud /></Slot>
        <Slot $w={48}><Mic /></Slot>
        <Language>ENG<br />IN</Language>
        <Slot $w={48}><Wifi /></Slot>
        <Slot $w={24}><Speaker /></Slot>
        <Slot $w={48}><Battery /></Slot>
        <Clock><Label $ls={-0.5}>21:45</Label><br /><Label $ls={-0.18}>20-03-2023</Label></Clock>
        <Count>21</Count>
      </Taskbar>
    </Screen>
  );
}
